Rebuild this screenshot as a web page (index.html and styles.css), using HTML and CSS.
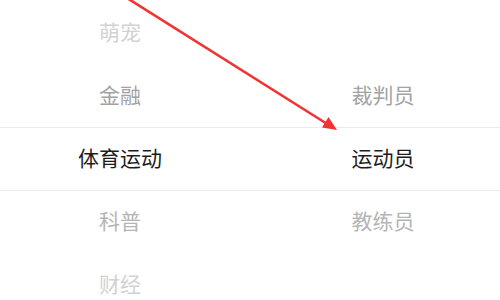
FILE: index.html
```html
<!DOCTYPE html>
<html lang="zh">
<head>
<meta charset="utf-8">
<link rel="stylesheet" href="styles.css">
</head>
<body>
<div class="picker">
  <div class="col col-left">
    <div class="item far">萌宠</div>
    <div class="item near">金融</div>
    <div class="item selected">体育运动</div>
    <div class="item near2">科普</div>
    <div class="item far">财经</div>
  </div>
  <div class="col col-right">
    <div class="item"></div>
    <div class="item near">裁判员</div>
    <div class="item selected">运动员</div>
    <div class="item near2">教练员</div>
    <div class="item"></div>
  </div>
  <div class="band"></div>
  <svg class="arrow" width="500" height="300" viewBox="0 0 500 300">
    <line x1="127" y1="-2" x2="328" y2="124.5" stroke="#f03333" stroke-width="2.6" stroke-linecap="round"/>
    <polygon points="337,130 322,127.5 328.5,117" fill="#f03333"/>
  </svg>
</div>
</body>
</html>
```

FILE: styles.css
```css
html, body {
  margin: 0;
  padding: 0;
  background: #ffffff;
}
body {
  width: 500px;
  height: 300px;
  overflow: hidden;
  font-family: "Noto Sans CJK SC", "Noto Sans", sans-serif;
}
.picker {
  position: relative;
  display: grid;
  grid-template-columns: 240px 1fr;
  padding-top: 0;
  height: 300px;
  overflow: hidden;
}
.col {
  display: flex;
  flex-direction: column;
}
.col-right {
  padding-left: 26px;
}
.item {
  height: 63px;
  flex: 0 0 63px;
  display: flex;
  align-items: center;
  justify-content: center;
  font-size: 21px;
  line-height: 1;
  color: #a6a6a6;
}
.item.far {
  color: #d2d2d2;
}
.item.near {
  color: #a3a3a3;
}
.item.near2 {
  color: #b5b5b5;
}
.item.selected {
  color: #1c1c1c;
}
.band {
  position: absolute;
  left: 0;
  right: 0;
  top: 127px;
  height: 62px;
  border-top: 1px solid #ececec;
  border-bottom: 1px solid #ececec;
  pointer-events: none;
}
.arrow {
  position: absolute;
  left: 0;
  top: 0;
  pointer-events: none;
}
```
